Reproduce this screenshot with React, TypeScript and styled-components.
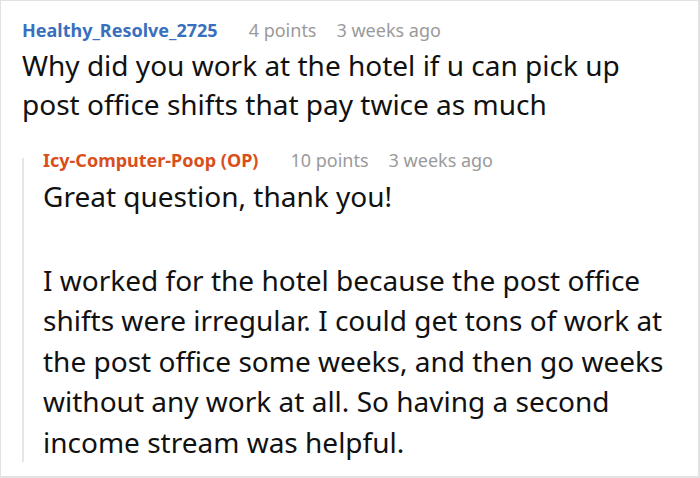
import React from "react";
import styled, { createGlobalStyle } from "styled-components";

const Global = createGlobalStyle`
  html, body { margin: 0; padding: 0; background: #ffffff; }
  body { font-family: "Noto Sans", "Open Sans", sans-serif; }
`;

const Card = styled.div`
  box-sizing: border-box;
  width: 700px;
  height: 478px;
  border: 1px solid #e2e2e2;
  border-right-width: 2px;
  border-bottom-width: 2px;
  padding: 17px 18px 0 21px;
  background: #fff;
  overflow: hidden;
`;

const Meta = styled.div`
  display: flex;
  align-items: baseline;
  font-size: 18px;
  line-height: 24px;
  white-space: nowrap;
`;

const Author = styled.span<{ $op?: boolean }>`
  font-weight: 700;
  color: ${(p) => (p.$op ? "#d84f1c" : "#3a6fbe")};
  margin-right: ${(p) => (p.$op ? 32 : 31)}px;
`;

const Points = styled.span`
  color: #9a9a9a;
  margin-right: 20px;
`;

const Age = styled.span`
  color: #9a9a9a;
`;

const Body = styled.div<{ $lh: number }>`
  margin-top: 4px;
  font-size: 28px;
  line-height: ${(p) => p.$lh}px;
  color: #111;
`;

const Para = styled.p`
  margin: 0 0 43px;
  &:last-child { margin-bottom: 0; }
`;

const Reply = styled.div`
  display: flex;
  margin-top: 24px;
`;

const ThreadLine = styled.div`
  flex: 0 0 2px;
  margin-top: 10px;
  background: #e6e6e6;
`;

const ReplyContent = styled.div`
  margin-left: 19px;
  flex: 1;
`;

interface CommentProps {
  author: string;
  op?: boolean;
  points: string;
  age: string;
  lh: number;
  paragraphs: string[];
}

const CommentBlock = ({ author, op, points, age, lh, paragraphs }: CommentProps) => (
  <>
    <Meta>
      <Author $op={op}>{author}</Author>
      <Points>{points}</Points>
      <Age>{age}</Age>
    </Meta>
    <Body $lh={lh}>
      {paragraphs.map((p, i) => (
        <Para key={i}>{p}</Para>
      ))}
    </Body>
  </>
);

export default function App() {
  return (
    <>
      <Global />
      <Card>
        <CommentBlock
          author="Healthy_Resolve_2725"
          points="4 points"
          age="3 weeks ago"
          lh={39}
          paragraphs={[
            "Why did you work at the hotel if u can pick up post office shifts that pay twice as much",
          ]}
        />
        <Reply>
          <ThreadLine />
          <ReplyContent>
            <CommentBlock
              author="Icy-Computer-Poop (OP)"
              op
              points="10 points"
              age="3 weeks ago"
              lh={40.5}
              paragraphs={[
                "Great question, thank you!",
                "I worked for the hotel because the post office shifts were irregular. I could get tons of work at the post office some weeks, and then go weeks without any work at all. So having a second income stream was helpful.",
              ]}
            />
          </ReplyContent>
        </Reply>
      </Card>
    </>
  );
}
